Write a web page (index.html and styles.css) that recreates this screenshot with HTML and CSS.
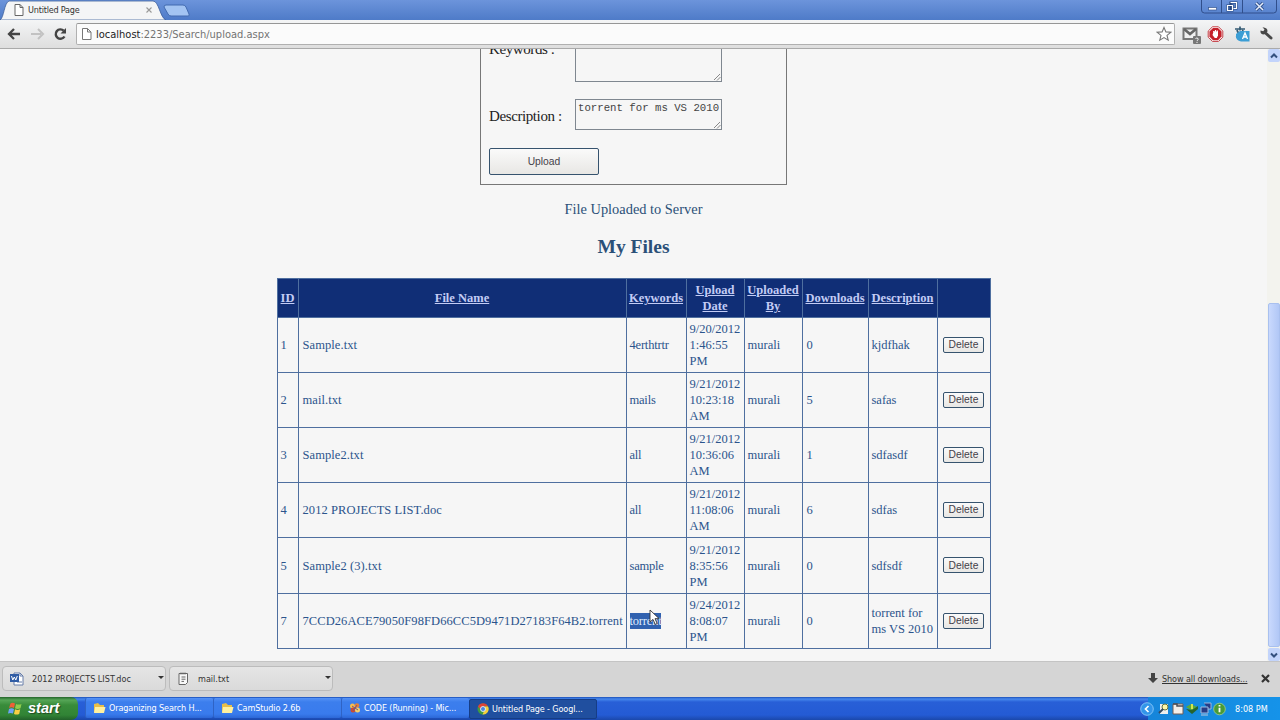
FILE: index.html
```html
<!DOCTYPE html>
<html lang="en">
<head>
    <meta charset="UTF-8">
    <meta name="viewport" content="width=device-width, initial-scale=1.0">
    <title>Untitled Page</title>
    <link rel="stylesheet" href="styles.css">
</head>
<body>
    <!-- Tab strip -->
    <div class="tab-strip">
        <div class="tab">
            <svg class="tab-shape" width="168" height="20" viewBox="0 0 168 20"><path d="M0 20 C4 18 4 3 9 1 H153 C159 1 160 18 166 20 Z" fill="#f4f5f6" stroke="#3e5f9c" stroke-width=".8"/></svg>
            <svg class="tab-page" width="10" height="12" viewBox="0 0 10 12"><path d="M1 .5h5l3 3v8H1zM6 .5v3h3" fill="#fff" stroke="#666"/></svg>
            <span class="tab-title">Untitled Page</span>
            <svg class="tab-close" width="6" height="6" viewBox="0 0 6 6"><path d="M.5.5l5 5M5.500.5l-5 5" stroke="#999" stroke-width="1.1"/></svg>
        </div>
        <svg class="new-tab" width="27" height="14" viewBox="0 0 27 14"><path d="M3 1h17q2 0 3 2l3 7q1 2-1 2H8q-2 0-3-2L1 3q0-2 2-2z" fill="#a3c4f2" stroke="#426bb0"/></svg>
        <div class="window-buttons">
            <svg width="76" height="14" viewBox="0 0 76 14">
                <path d="M.5 0v10q0 3 3 3h69q3 0 3-3V0M20.500 0v13M41.500 0v13" fill="none" stroke="#304f8c"/>
                <rect x="7.500" y="7.500" width="8" height="2.500" fill="#fff" stroke="#35558f" stroke-width=".7"/>
                <path d="M29.500 2.500h6v6h-6zM26.500 5.500h5v5h-5z" fill="#5c84c6" stroke="#24457f" stroke-width="2.200"/>
                <path d="M29.500 2.500h6v6h-3M26.500 5.500h5v5h-5z" fill="none" stroke="#fff" stroke-width="1.200"/>
                <path d="M55 3l7 7M62 3l-7 7" stroke="#35558f" stroke-width="3.200"/>
                <path d="M55 3l7 7M62 3l-7 7" stroke="#e5edfb" stroke-width="1.500"/>
            </svg>
        </div>
    </div>

    <!-- Toolbar -->
    <div class="toolbar">
        <svg class="nav-icons" width="76" height="28" viewBox="0 0 76 28">
            <path d="M20 14H10M14 9l-5 5 5 5" fill="none" stroke="#444" stroke-width="2.300"/>
            <path d="M31 14h10M38 9l5 5-5 5" fill="none" stroke="#c2c2c2" stroke-width="2"/>
            <path d="M64.500 16.500a4.700 4.700 0 1 1-.8-5.800" fill="none" stroke="#444" stroke-width="2.400"/>
            <path d="M66 8v5.500h-5.500z" fill="#444"/>
        </svg>
        <div class="address-bar">
            <svg class="page-icon" width="10" height="12" viewBox="0 0 10 12"><path d="M.5.5h5l3.500 3.500v7.500H.5zM5.500.5V4H9" fill="#fff" stroke="#777"/></svg>
            <span class="url"><b>localhost</b>:2233/Search/upload.aspx</span>
            <svg class="star" width="16" height="16" viewBox="0 0 16 16"><path d="M8 1.500l1.900 4.400 4.800.4-3.700 3.100 1.200 4.700L8 11.600l-4.200 2.500L5 9.400 1.300 6.300l4.800-.4z" fill="#fff" stroke="#777" stroke-width="1.100"/></svg>
        </div>
        <svg class="extensions" width="104" height="28" viewBox="0 0 104 28">
            <rect x="8.500" y="8.500" width="13" height="10.500" fill="#f0f0f0" stroke="#777" stroke-width="2"/>
            <path d="M9 9l6 5 6-5" fill="none" stroke="#666" stroke-width="2.600"/>
            <rect x="18" y="16" width="8" height="8" rx="1" fill="#777"/>
            <path d="M20.500 18.500q1.500-1 2.500 0t-1 2.200v.5M22 22v1" fill="none" stroke="#fff" stroke-width=".9"/>
            <path d="M37.500 6.800h6l4.300 4.300v6l-4.300 4.300h-6l-4.300-4.300v-6z" fill="#fff" stroke="#c23b42"/>
            <path d="M38 8h5l3.600 3.600v5L43 20.200h-5L34.400 16.600v-5z" fill="#c5202a"/>
            <path d="M38.500 11.500h4.500v4l-1.200 2.500h-2l-2.300-3z" fill="#fff"/>
            <path d="M38.800 12v-1M40.500 12v-2M42.300 12v-1.500" stroke="#fff" stroke-width="1.200"/>
            <path d="M60 9h10M65 6.500v4M62 10c1 4 4 5 6 6M68 10c-1 4-3 6-7 7" fill="none" stroke="#345b74" stroke-width="1.700"/>
            <path d="M61 14l4-3h9.500v10.500H66q-5-1-5-5z" fill="#3c9ed5"/>
            <path d="M67.500 19l2.500-6 2.500 6M68.500 17h3" fill="none" stroke="#fff" stroke-width="1.300"/>
            <path d="M90 12.500l6 5.500" stroke="#484848" stroke-width="3" stroke-linecap="round"/>
            <path d="M87.500 7.200l2 2.300-1.200 1.800-2.800-.8q-.6 4 3.600 4l3.400-3q.3-4-5-4.300z" fill="#484848"/>
        </svg>
    </div>

    <!-- Page -->
    <div class="viewport">
        <div class="page">
            <div class="upload-form">
                <div class="form-row">
                    <label>Keywords :</label>
                    <div class="text-box tall"><svg class="grip" width="8" height="8" viewBox="0 0 8 8"><path d="M1 7l6-6M4 7.500l3.500-3.500" stroke="#888"/></svg></div>
                </div>
                <div class="form-row description-row">
                    <label>Description :</label>
                    <div class="text-box">torrent for ms VS 2010<svg class="grip" width="8" height="8" viewBox="0 0 8 8"><path d="M1 7l6-6M4 7.500l3.500-3.500" stroke="#888"/></svg></div>
                </div>
                <button class="upload-button">Upload</button>
            </div>
            <p class="status">File Uploaded to Server</p>
            <h2>My Files</h2>
            <table class="files">
                <colgroup>
                    <col class="c-id"><col class="c-name"><col class="c-key"><col class="c-date"><col class="c-by"><col class="c-down"><col class="c-desc"><col class="c-del">
                </colgroup>
                <tr><th><a>ID</a></th><th><a>File Name</a></th><th><a>Keywords</a></th><th><a>Upload Date</a></th><th><a>Uploaded By</a></th><th><a>Downloads</a></th><th><a>Description</a></th><th></th></tr>
                <tr><td>1</td><td>Sample.txt</td><td>4erthtrtr</td><td>9/20/2012 1:46:55 PM</td><td>murali</td><td>0</td><td>kjdfhak</td><td><button>Delete</button></td></tr>
                <tr><td>2</td><td>mail.txt</td><td>mails</td><td>9/21/2012 10:23:18 AM</td><td>murali</td><td>5</td><td>safas</td><td><button>Delete</button></td></tr>
                <tr><td>3</td><td>Sample2.txt</td><td>all</td><td>9/21/2012 10:36:06 AM</td><td>murali</td><td>1</td><td>sdfasdf</td><td><button>Delete</button></td></tr>
                <tr><td>4</td><td>2012 PROJECTS LIST.doc</td><td>all</td><td>9/21/2012 11:08:06 AM</td><td>murali</td><td>6</td><td>sdfas</td><td><button>Delete</button></td></tr>
                <tr class="taller"><td>5</td><td>Sample2 (3).txt</td><td>sample</td><td>9/21/2012 8:35:56 PM</td><td>murali</td><td>0</td><td>sdfsdf</td><td><button>Delete</button></td></tr>
                <tr><td>7</td><td>7CCD26ACE79050F98FD66CC5D9471D27183F64B2.torrent</td><td><span class="selected">torrent<svg class="cursor" width="12" height="18" viewBox="0 0 12 18"><path d="M1 1v12l3-2.600 2.200 5 2-.9-2.200-4.800h4.200z" fill="#fff" stroke="#333" stroke-width=".9"/></svg></span></td><td>9/24/2012 8:08:07 PM</td><td>murali</td><td>0</td><td>torrent for ms VS 2010</td><td><button>Delete</button></td></tr>
            </table>
        </div>
        <div class="scrollbar">
            <div class="scroll-button"><svg width="8" height="6" viewBox="0 0 8 6"><path d="M1 4.500l3-3 3 3" fill="none" stroke="#34507e" stroke-width="2"/></svg></div>
            <div class="scroll-thumb"></div>
            <div class="scroll-button"><svg width="8" height="6" viewBox="0 0 8 6"><path d="M1 1.500l3 3 3-3" fill="none" stroke="#34507e" stroke-width="2"/></svg></div>
        </div>
    </div>

    <!-- Downloads -->
    <div class="downloads">
        <div class="download">
            <svg width="14" height="14" viewBox="0 0 14 14"><path d="M4 1h6l3 3v9H4z" fill="#fff" stroke="#667da8"/><path d="M10 1v3h3M7 10h5" fill="none" stroke="#667da8"/><rect x="0" y="2" width="9" height="8" fill="#315da5"/><path d="M1.500 4l1.300 4 1.500-3 1.500 3 1.500-4" fill="none" stroke="#fff"/></svg>
            <span>2012 PROJECTS LIST.doc</span>
            <i class="arrow"></i>
        </div>
        <div class="download">
            <svg width="14" height="14" viewBox="0 0 14 14"><path d="M2 1.500h8.500v9l-2 2H2zM4.500 5h4M4.500 7.200h4M4.500 9.400H7" fill="#f8f8f8" stroke="#666"/><path d="M4 .5v2M6 .5v2M8 .5v2" stroke="#666"/></svg>
            <span class="txt-name">mail.txt</span>
            <i class="arrow"></i>
        </div>
        <div class="show-all">
            <svg width="10" height="11" viewBox="0 0 10 11"><path d="M3 0h4v5h3l-5 5-5-5h3z" fill="#444"/></svg>
            <span>Show all downloads...</span>
            <svg width="9" height="9" viewBox="0 0 9 9"><path d="M1 1l7 7M8 1L1 8" stroke="#333" stroke-width="2.200"/></svg>
        </div>
    </div>

    <!-- Taskbar -->
    <div class="taskbar">
        <div class="start">
            <svg width="15" height="15" viewBox="0 0 15 15"><path d="M2.500 2.500q2-1.500 4.500 0L6 7Q3.500 5.700 1 7z" fill="#ef6037"/><path d="M8 3q2.500 1.200 5.500 0L12.500 7.300q-3 1.200-5.500 0z" fill="#91cd4d"/><path d="M1 8q2.500-1.300 5 0L5 12.500q-2.500-1.200-5 0z" fill="#6ca3f6"/><path d="M7 8.300q2.500 1.200 5.200 0L11.200 13q-2.700 1.200-5.200 0z" fill="#f7cf43"/></svg>
            <span>start</span>
        </div>
        <div class="task">
            <svg width="13" height="12" viewBox="0 0 13 12"><path d="M1 10V2l4-1 2 2h4v7z" fill="#e8be48"/><path d="M2 5h10.500L11 11H1z" fill="#fff0a0"/></svg>
            <span>Oraganizing Search H...</span>
        </div>
        <div class="task">
            <svg width="13" height="12" viewBox="0 0 13 12"><path d="M1 10V2l4-1 2 2h4v7z" fill="#e8be48"/><path d="M2 5h10.500L11 11H1z" fill="#fff0a0"/></svg>
            <span>CamStudio 2.6b</span>
        </div>
        <div class="task">
            <svg width="12" height="12" viewBox="0 0 12 12"><circle cx="3.500" cy="4" r="2.500" fill="#f7bd50"/><circle cx="8" cy="3.500" r="2.300" fill="#e78035"/><circle cx="4" cy="8" r="2.500" fill="#c94c32"/><circle cx="8.500" cy="8" r="2.500" fill="#f5cf69"/><path d="M3 4l6 4M8 3L4 9" stroke="#7b547c"/></svg>
            <span>CODE (Running) - Mic...</span>
        </div>
        <div class="task active">
            <svg width="12" height="12" viewBox="0 0 12 12"><circle cx="6" cy="6" r="5.500" fill="#3f9b42"/><path d="M1 3.500A5.500 5.500 0 0 1 11 3.500H6L4 7z" fill="#dd4436"/><path d="M11 3.500A5.500 5.500 0 0 1 5.500 11.500L8 6V3.500z" fill="#f4cf3d"/><circle cx="6" cy="6" r="2.500" fill="#4b86db" stroke="#fff" stroke-width=".8"/></svg>
            <span>Untitled Page - Googl...</span>
        </div>
        <div class="tray">
            <svg width="86" height="22" viewBox="0 0 86 22">
                <circle cx="7" cy="11" r="6.300" fill="#3295e9" stroke="#96d0fa" stroke-width=".8"/><path d="M8.500 8l-3 3 3 3" fill="none" stroke="#fff" stroke-width="1.700"/>
                <path d="M20 6h8v10h-8z" fill="#eee"/><circle cx="25" cy="9" r="3" fill="#fff8a9" stroke="#65733f"/><path d="M23 11l-4 4" stroke="#344a63" stroke-width="2"/>
                <path d="M33 6h10v10H33z" fill="#f4eee8" stroke="#735c55"/><path d="M33 6h4v2h6" fill="none" stroke="#4d4d54" stroke-width="1.500"/>
                <path d="M46 9l5-3 6 3-5 4z" fill="#5aa93b"/><path d="M46 11l6 5 6-5v-3l-6 4z" fill="#26642d"/><path d="M52 6v5" stroke="#d2e54e" stroke-width="2"/>
                <path d="M61 9h7v6h-7zM64 5h7v6h-3" fill="#263c86" stroke="#9db9df"/><path d="M61 17h7" stroke="#bbc6db"/>
                <circle cx="79.500" cy="11" r="5.800" fill="#499b37" stroke="#a8cf80" stroke-width=".8"/><path d="M79.500 9.800v4.500M79.500 7v1.600" stroke="#fff" stroke-width="1.800"/>
            </svg>
            <span class="clock">8:08 PM</span>
        </div>
    </div>
</body>
</html>
```
FILE: styles.css
```css
* {
    box-sizing: border-box;
}

body {
    margin: 0;
    width: 1280px;
    height: 720px;
    overflow: hidden;
    display: flex;
    flex-direction: column;
    background-color: #f6f6f6;
    font-family: "DejaVu Sans Condensed", "DejaVu Sans", sans-serif;
    font-size: 9px;
}

svg {
    display: block;
    flex: none;
}

span {
    white-space: nowrap;
}

/* browser window */
.tab-strip {
    display: flex;
    height: 20px;
    background: linear-gradient(#6c94db, #4e7bc8);
}

.tab {
    position: relative;
    display: flex;
    align-items: center;
    width: 163px;
    padding-left: 14px;
}

.tab-shape {
    position: absolute;
    left: 0;
    top: 0;
}

.tab-page,
.tab-title,
.tab-close {
    position: relative;
}

.tab-title {
    margin-left: 4px;
    width: 118px;
    color: #333;
    letter-spacing: -0.2px;
}

.new-tab {
    margin-top: 4px;
}

.window-buttons {
    margin-left: auto;
    margin-right: 3px;
}

.toolbar {
    display: flex;
    height: 29px;
    background: linear-gradient(#f4f5f6, #dedede);
    border-bottom: 1px solid #aaa;
}

.address-bar {
    display: flex;
    align-items: center;
    width: 1099px;
    height: 22px;
    margin-top: 3px;
    padding: 0 2px 0 5px;
    border: 1px solid #b0b0b0;
    border-top-color: #969696;
    border-radius: 2px;
    background-color: #fbfbfb;
}

.url {
    margin-left: 4px;
    font-size: 11px;
    color: #737373;
}

.url b {
    font-weight: normal;
    color: #222;
}

.star {
    margin-left: auto;
}

/* page area */
.viewport {
    display: flex;
    height: 612px;
    overflow: hidden;
}

.page {
    width: 1267px;
    display: flex;
    flex-direction: column;
    align-items: center;
    font-family: "Liberation Serif", serif;
    color: #2b5078;
}

.upload-form {
    width: 307px;
    height: 177px;
    margin-top: -41px;
    padding: 7px 8px;
    border: 1px solid #777;
    flex: none;
}

.form-row {
    display: flex;
    align-items: center;
    font-size: 15px;
    letter-spacing: -0.4px;
    color: #222;
}

.form-row label {
    width: 86px;
}

.description-row {
    margin: 17px 0 18px;
}

.description-row label {
    padding-top: 4px;
}

.text-box {
    position: relative;
    width: 147px;
    height: 31px;
    padding: 2px;
    border: 1px solid #7f8790;
    font-family: "Liberation Mono", monospace;
    font-size: 10.7px;
    letter-spacing: 0;
    line-height: 13px;
    white-space: nowrap;
    color: #444;
}

.tall {
    height: 66px;
}

.grip {
    position: absolute;
    right: 0;
    bottom: 0;
}

button {
    font-family: "Liberation Sans", sans-serif;
    font-size: 10.3px;
    color: #453f4a;
    border: 1px solid #36536e;
    border-radius: 2px;
    background: linear-gradient(#fafafa, #e8e7e4);
    padding: 0;
}

.upload-button {
    display: block;
    width: 110px;
    height: 27px;
}

.status {
    margin: 16px 0 0;
    font-size: 14.4px;
    line-height: 17px;
}

h2 {
    margin: 17px 0 0;
    font-size: 19.5px;
    line-height: 24px;
}

.files {
    width: 713px;
    margin-top: 19px;
    table-layout: fixed;
    border-collapse: collapse;
    font-size: 12.5px;
    line-height: 16px;
    color: #2b548c;
}

.c-id { width: 21px; }
.c-name { width: 328px; }
.c-key { width: 60px; }
.c-date { width: 58px; }
.c-by { width: 58px; }
.c-down { width: 66px; }
.c-desc { width: 69px; }
.c-del { width: 53px; }

.files tr {
    height: 55px;
}

.files tr:first-child {
    height: 39px;
}

.files .taller {
    height: 56px;
}

.files th,
.files td {
    border: 1px solid #4f6f9f;
    padding: 0 3px;
}

.files td:nth-child(2) {
    padding-left: 4px;
    letter-spacing: 0.08px;
}

.files td:nth-child(3) {
    letter-spacing: -0.2px;
}

.files td:nth-child(6) {
    padding-left: 4px;
}

.files th {
    padding: 0;
    background-color: #102e76;
    color: #c3ccf5;
}

.files a {
    text-decoration: underline;
}

.files td:last-child {
    text-align: center;
    padding: 0 0 2px;
}

.files button {
    width: 41px;
    height: 16px;
    vertical-align: middle;
}

.selected {
    position: relative;
    display: inline-block;
    background-color: #3162b0;
    color: #dfebff;
}

.cursor {
    position: absolute;
    left: 19px;
    top: -4px;
}

.scrollbar {
    display: flex;
    flex-direction: column;
    width: 13px;
    background-color: #f3f3ee;
}

.scroll-button {
    display: flex;
    align-items: center;
    justify-content: center;
    height: 13px;
    margin-left: 1px;
    border-radius: 2px;
    background-color: #c3d4fb;
}

.scroll-thumb {
    height: 344px;
    margin: auto 0 1px 1px;
    border: 1px solid #a9c0ef;
    border-radius: 2px;
    background: linear-gradient(90deg, #c9d9fd, #b1c7f6);
}

/* downloads shelf */
.downloads {
    display: flex;
    height: 36px;
    padding: 4px 10px 0 2px;
    gap: 3px;
    background-color: #d5d5d5;
    border-top: 1px solid #c4c4c4;
    color: #333;
}

.download {
    display: flex;
    align-items: center;
    width: 164px;
    height: 25px;
    padding: 0 1px 0 7px;
    border: 1px solid #bcbcbc;
    border-radius: 4px;
    background: linear-gradient(#e5e5e5, #dadada);
}

.download span {
    margin-left: 8px;
}

.download .txt-name {
    margin-left: 7px;
}

.arrow {
    margin: -3px 0 0 auto;
    border: 3px solid transparent;
    border-top-color: #333;
    border-bottom: 0;
}

.show-all {
    display: flex;
    align-items: center;
    height: 25px;
    margin-left: auto;
}

.show-all span {
    width: 99px;
    margin-left: 4px;
    letter-spacing: -0.1px;
    text-decoration: underline;
}

/* XP taskbar */
.taskbar {
    display: flex;
    height: 23px;
    background: linear-gradient(#1c50b9 0, #4789ee 2px, #285fd7 5px, #245bd4 18px, #1b48ab);
    color: #fff;
}

.start {
    display: flex;
    align-items: center;
    width: 78px;
    padding-left: 8px;
    border-radius: 0 7px 7px 0;
    background: linear-gradient(#25642a, #56a657 3px, #398c3a 8px, #318435 18px, #22612a);
    font-family: "Liberation Sans", sans-serif;
    font-size: 14.5px;
    font-weight: bold;
    font-style: italic;
}

.start span {
    margin: -2px 0 0 5px;
    text-shadow: 1px 1px 1px #1f4922;
}

.task {
    display: flex;
    align-items: center;
    width: 128px;
    height: 20px;
    margin-top: 1px;
    padding-left: 7px;
    border-left: 1px solid #2f63c5;
    border-radius: 2px;
    background: linear-gradient(#5693f7, #3c7eed 4px, #397bed 16px, #2c67d6);
}

.start + .task {
    margin-left: 7px;
}

.task span {
    margin-left: 3px;
    letter-spacing: -0.12px;
}

.task.active {
    margin-top: 2px;
    background: #204f9f;
    border: 1px solid #163d86;
}

.tray {
    display: flex;
    align-items: center;
    width: 140px;
    margin-left: auto;
    background: linear-gradient(90deg, transparent 0, transparent 8px, #1585da 8px, #1593e9);
}

.clock {
    margin-left: 9px;
}
```
